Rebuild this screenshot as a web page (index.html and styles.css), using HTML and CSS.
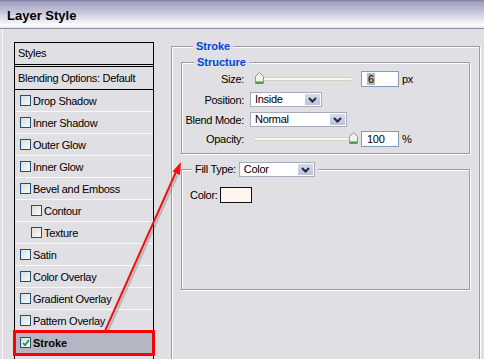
FILE: index.html
```html
<!DOCTYPE html>
<html lang="en">
<head>
  <meta charset="UTF-8">
  <title>Layer Style</title>
  <link rel="stylesheet" href="styles.css">
</head>
<body>

<div class="titlebar">Layer Style</div>

<div class="dialog">
  <div class="styles">
    <div class="head">Styles</div>
    <div class="blend">Blending Options: Default</div>
    <div class="item"><i class="cb"></i>Drop Shadow</div>
    <div class="item"><i class="cb"></i>Inner Shadow</div>
    <div class="item"><i class="cb"></i>Outer Glow</div>
    <div class="item"><i class="cb"></i>Inner Glow</div>
    <div class="item"><i class="cb"></i>Bevel and Emboss</div>
    <div class="item sub"><i class="cb"></i>Contour</div>
    <div class="item sub"><i class="cb"></i>Texture</div>
    <div class="item"><i class="cb"></i>Satin</div>
    <div class="item"><i class="cb"></i>Color Overlay</div>
    <div class="item"><i class="cb"></i>Gradient Overlay</div>
    <div class="item"><i class="cb"></i>Pattern Overlay</div>
    <div class="item active"><i class="cb"><svg width="8" height="8" viewBox="0 0 8 8"><path d="M1 4l2 2.2L7 1" stroke="#1f9a1f" stroke-width="1.8" fill="none"/></svg></i>Stroke</div>
    <div class="item"></div>
  </div>

  <div class="panel">
    <div class="group outer">
      <div class="caption">Stroke</div>

      <div class="group structure">
        <div class="caption">Structure</div>
        <div class="fields">
          <label>Size:</label>
          <div class="ctl">
            <div class="slider">
              <div class="track"></div>
              <svg class="thumb" style="left:2px" width="9" height="12" viewBox="0 0 9 12"><path d="M.5 4.5 4.5.5 8.5 4.5V11.5H.5Z" fill="#f2f2ee" stroke="#8a968a"/><path d="M1 10.5h7" stroke="#3aa03a" stroke-width="2"/></svg>
            </div>
            <div class="input"><span class="hl">6</span></div>
            <span class="unit">px</span>
          </div>

          <label>Position:</label>
          <div class="ctl">
            <div class="select pos"><span>Inside</span><b><svg width="9" height="6" viewBox="0 0 9 6"><path d="M1 1l3.5 3.5L8 1" stroke="#1d2748" stroke-width="2" fill="none"/></svg></b></div>
          </div>

          <label>Blend Mode:</label>
          <div class="ctl">
            <div class="select mode"><span>Normal</span><b><svg width="9" height="6" viewBox="0 0 9 6"><path d="M1 1l3.5 3.5L8 1" stroke="#1d2748" stroke-width="2" fill="none"/></svg></b></div>
          </div>

          <label>Opacity:</label>
          <div class="ctl">
            <div class="slider">
              <div class="track"></div>
              <svg class="thumb" style="left:96px" width="9" height="12" viewBox="0 0 9 12"><path d="M.5 4.5 4.5.5 8.5 4.5V11.5H.5Z" fill="#f2f2ee" stroke="#8a968a"/><path d="M1 10.5h7" stroke="#3aa03a" stroke-width="2"/></svg>
            </div>
            <div class="input">100</div>
            <span class="unit">%</span>
          </div>
        </div>
      </div>

      <div class="group fill">
        <div class="caption plain">
          <span>Fill Type:</span>
          <div class="select kind"><span>Color</span><b><svg width="9" height="6" viewBox="0 0 9 6"><path d="M1 1l3.5 3.5L8 1" stroke="#1d2748" stroke-width="2" fill="none"/></svg></b></div>
        </div>
        <div class="color-row">Color: <span class="swatch"></span></div>
      </div>
    </div>
  </div>
</div>

<svg class="arrow" width="484" height="359" viewBox="0 0 484 359">
  <line x1="108" y1="331" x2="178" y2="174" stroke="rgba(60,60,70,0.25)" stroke-width="2"/>
  <line x1="105" y1="331" x2="176" y2="172" stroke="#f01010" stroke-width="2"/>
  <path d="M181 162 180 175 172.5 171.5Z" fill="#f01010"/>
</svg>

</body>
</html>
```

FILE: styles.css
```css
body {
  margin: 0; width: 484px; height: 359px; overflow: hidden;
  position: relative;
  background: #e0dfe3; color: #000;
  font: 11px "Liberation Sans", Arial, sans-serif;
  letter-spacing: -0.3px;
}
.titlebar {
  height: 26px; padding: 2px 0 0 7px;
  border-bottom: 1px solid #8e8ea6;
  background: linear-gradient(#7a7a9a 0, #a0a0c0 2px, #c6c6da 12px, #f2f2f7 23px, #fff 25px, #e6e6ec 28px);
  font: bold 13px "Liberation Sans", Arial, sans-serif;
  letter-spacing: 0;
  line-height: 28px;
}
.dialog {
  display: flex; align-items: flex-start;
  margin-left: 2px; border-left: 1px solid #f8f8fa;
  padding: 13px 0 0 11px; height: 317px; overflow: hidden;
}

/* styles list */
.styles {
  width: 140px; height: 330px; box-sizing: border-box;
  border: 1px solid #000;
}
.styles .head {
  height: 21px; line-height: 21px; padding-left: 3px;
  border-bottom: 3px double #000;
}
.styles .blend {
  height: 22px; line-height: 22px; padding-left: 3px;
  border-bottom: 1px solid #000;
}
.item {
  height: 21px; display: flex; align-items: center;
  padding-left: 5px; border-bottom: 1px solid #f7f7f9;
}
.item.sub { padding-left: 16px; }
.cb {
  width: 11px; height: 11px; box-sizing: border-box;
  border: 1px solid #1c5180; margin-right: 2px;
  background: linear-gradient(135deg, #dcdcd6, #fafaf8);
  display: flex; align-items: center; justify-content: center;
}
.item.active {
  background: #b5b6c3; font-weight: bold; letter-spacing: 0;
  outline: 3px solid #f00; outline-offset: -1px;
}

/* right panel */
.panel { margin-left: 17px; padding-top: 4px; }
.group {
  border: 1px solid #9c9ca4;
  box-shadow: inset 1px 1px 0 #fff, 1px 1px 0 #fff;
}
.caption {
  display: table; margin: -7px 0 0 12px; padding: 0 3px;
  background: #e0dfe3; color: #0046d5;
  font-weight: bold; line-height: 13px; letter-spacing: 0;
}
.outer {
  width: 309px; height: 330px; box-sizing: border-box;
  padding: 0 9px;
}
.structure { margin-top: 9px; padding-bottom: 4px; }
.fields {
  display: grid;
  grid-template-columns: 62px auto;
  grid-template-rows: 19px 23px 17px 21px;
  column-gap: 6px; align-items: center;
}
.fields label { text-align: right; }
.ctl { display: flex; align-items: center; }
.slider { position: relative; width: 100px; height: 13px; margin: 0 8px 0 3px; }
.track {
  height: 2px; margin-top: 5px;
  background: #f7f7ee; border: 1px solid #d2d2c6; border-radius: 2px;
}
.thumb { position: absolute; top: 0; }
.input {
  width: 38px; height: 16px; box-sizing: border-box;
  border: 1px solid #7f9db9; background: #fff;
  padding-left: 5px; line-height: 14px;
}
.hl { background: #b9b9c2; padding: 0 1px; }
.unit { margin-left: 3px; }

.select {
  display: flex; height: 15px; box-sizing: border-box;
  border: 1px solid #a4acc0; background: #fff;
}
.select span { flex: 1; padding-left: 4px; line-height: 13px; }
.select b {
  width: 15px; margin: 1px;
  background: linear-gradient(#d6dae8, #bcc2d8);
  display: flex; align-items: center; justify-content: center;
}
.select.pos { width: 72px; }
.select.mode { width: 97px; }
.select.kind { width: 76px; }

.fill { margin-top: 15px; height: 119px; }
.caption.plain {
  display: flex; align-items: center; gap: 3px;
  width: max-content; margin: -8px 0 0 10px;
  color: #000; font-weight: normal; line-height: 15px;
  letter-spacing: -0.3px;
}
.color-row {
  display: flex; align-items: center; gap: 2px;
  margin-top: 10px; padding-left: 8px;
}
.swatch {
  width: 30px; height: 14px;
  border: 1px solid #111; background: #fff6ef;
}

.arrow { position: absolute; left: 0; top: 0; pointer-events: none; }
```
